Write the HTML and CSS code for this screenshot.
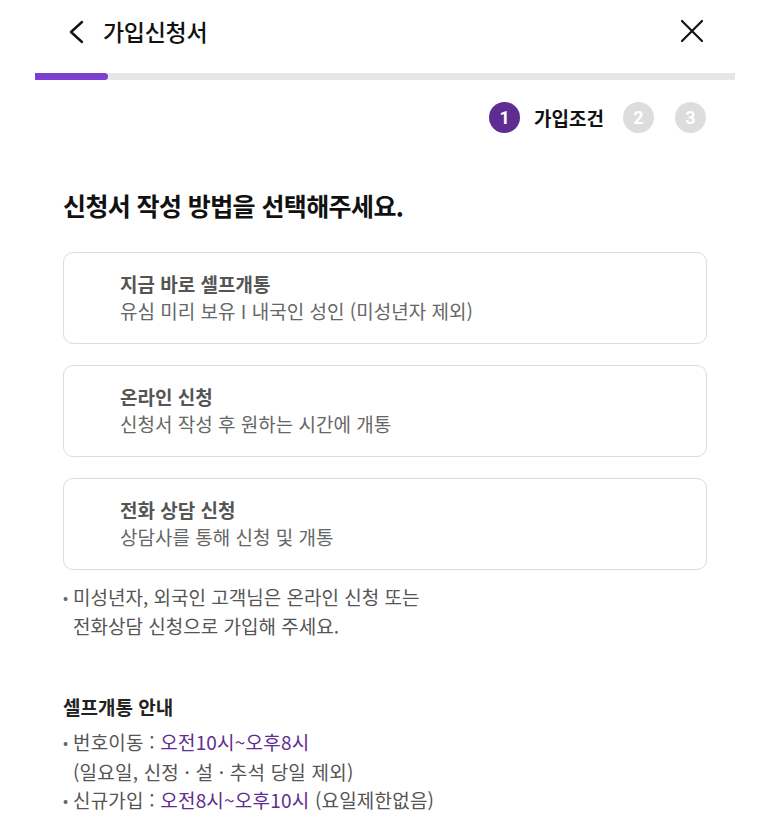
FILE: index.html
```html
<!DOCTYPE html>
<html lang="ko">
<head>
<meta charset="utf-8">
<link rel="stylesheet" href="styles.css">
</head>
<body>
<div class="page">
  <header class="topbar">
    <div class="topbar-left">
      <svg class="icon-back" width="18" height="24" viewBox="0 0 18 24"><path d="M15 2 L4 12 L15 22" fill="none" stroke="#111" stroke-width="2.4" stroke-linecap="round" stroke-linejoin="round"/></svg>
      <h1 class="title">가입신청서</h1>
    </div>
    <svg class="icon-close" width="24" height="24" viewBox="0 0 24 24"><path d="M2 2 L22 22 M22 2 L2 22" fill="none" stroke="#111" stroke-width="2.2" stroke-linecap="round"/></svg>
  </header>
  <div class="progress"><div class="progress-fill"></div></div>
  <div class="steps">
    <span class="step active">1</span>
    <span class="step-label">가입조건</span>
    <span class="step">2</span>
    <span class="step">3</span>
  </div>
  <main class="content">
    <h2 class="heading">신청서 작성 방법을 선택해주세요.</h2>
    <div class="cards">
      <div class="card">
        <div class="card-title">지금 바로 셀프개통</div>
        <div class="card-desc">유심 미리 보유 I 내국인 성인 (미성년자 제외)</div>
      </div>
      <div class="card">
        <div class="card-title">온라인 신청</div>
        <div class="card-desc">신청서 작성 후 원하는 시간에 개통</div>
      </div>
      <div class="card">
        <div class="card-title">전화 상담 신청</div>
        <div class="card-desc">상담사를 통해 신청 및 개통</div>
      </div>
    </div>
    <p class="note"><span class="dot">•</span>미성년자, 외국인 고객님은 온라인 신청 또는<br>전화상담 신청으로 가입해 주세요.</p>
    <h3 class="info-title">셀프개통 안내</h3>
    <ul class="info-list">
      <li><span class="dot">•</span>번호이동 : <span class="hl">오전10시~오후8시</span><br>(일요일, 신정 · 설 · 추석 당일 제외)</li>
      <li><span class="dot">•</span>신규가입 : <span class="hl">오전8시~오후10시</span> (요일제한없음)</li>
    </ul>
  </main>
</div>
</body>
</html>
```
FILE: styles.css
```css
* { box-sizing: border-box; }
html, body { margin: 0; padding: 0; background: #fff; }
body {
  font-family: "Noto Sans CJK KR", "Noto Sans", sans-serif;
  color: #222;
}
.page {
  width: 700px;
  margin-left: 35px;
}
.topbar {
  height: 64px;
  display: flex;
  align-items: center;
  justify-content: space-between;
  padding: 0 31px 2px 32px;
}
.topbar-left {
  display: flex;
  align-items: center;
  gap: 18px;
}
.icon-back { display: block; margin-top: 1px; }
.icon-close { display: block; }
.title {
  margin: 0;
  font-size: 23px;
  font-weight: 500;
  letter-spacing: -0.3px;
  color: #111;
}
.progress {
  margin-top: 9px;
  height: 7px;
  background: #e6e6e6;
}
.progress-fill {
  width: 73px;
  height: 7px;
  background: #7c3fd0;
  border-radius: 0 4px 4px 0;
}
.steps {
  display: flex;
  justify-content: flex-end;
  align-items: center;
  margin-top: 22px;
  height: 31px;
  padding-right: 29px;
}
.step {
  width: 31px;
  height: 31px;
  border-radius: 50%;
  background: #dddddd;
  color: #fff;
  font-family: "Roboto", "Noto Sans", sans-serif;
  font-weight: 700;
  font-size: 18px;
  display: flex;
  align-items: center;
  justify-content: center;
  margin-left: 21px;
}
.step.active { background: #5f2d91; margin-left: 0; }
.step-label {
  margin-left: 14px;
  font-size: 19px;
  font-weight: 700;
  letter-spacing: 0;
  color: #111;
  margin-right: -2px;
}
.content { padding: 0 28px; }
.heading {
  margin: 55px 0 30px;
  font-size: 25px;
  font-weight: 700;
  letter-spacing: -0.6px;
  color: #111;
  line-height: 34px;
}
.cards {
  display: flex;
  flex-direction: column;
  gap: 21px;
}
.card {
  border: 1px solid #dcdcdc;
  border-radius: 10px;
  height: 92px;
  padding: 17px 56px 0;
}
.card-title {
  font-size: 19px;
  font-weight: 700;
  color: #555;
  letter-spacing: 0;
  line-height: 27px;
}
.card-desc {
  font-size: 19px;
  color: #666;
  letter-spacing: 0;
  line-height: 27px;
}
.note {
  margin: 13px 0 0;
  font-size: 19px;
  color: #555;
  line-height: 27px;
  padding-left: 10px;
}
.dot {
  display: inline-block;
  width: 10px;
  margin-left: -10px;
  font-size: 15px;
  color: #666;
  position: relative;
  top: -2px;
}
.info-title {
  margin: 54px 0 8px;
  font-size: 19px;
  font-weight: 700;
  color: #222;
  line-height: 27px;
}
.info-list {
  list-style: none;
  margin: 0;
  padding: 0 0 0 10px;
  font-size: 19px;
  color: #555;
  line-height: 28px;
  letter-spacing: 0.2px;
}
.hl { color: #5f2d91; }
```
